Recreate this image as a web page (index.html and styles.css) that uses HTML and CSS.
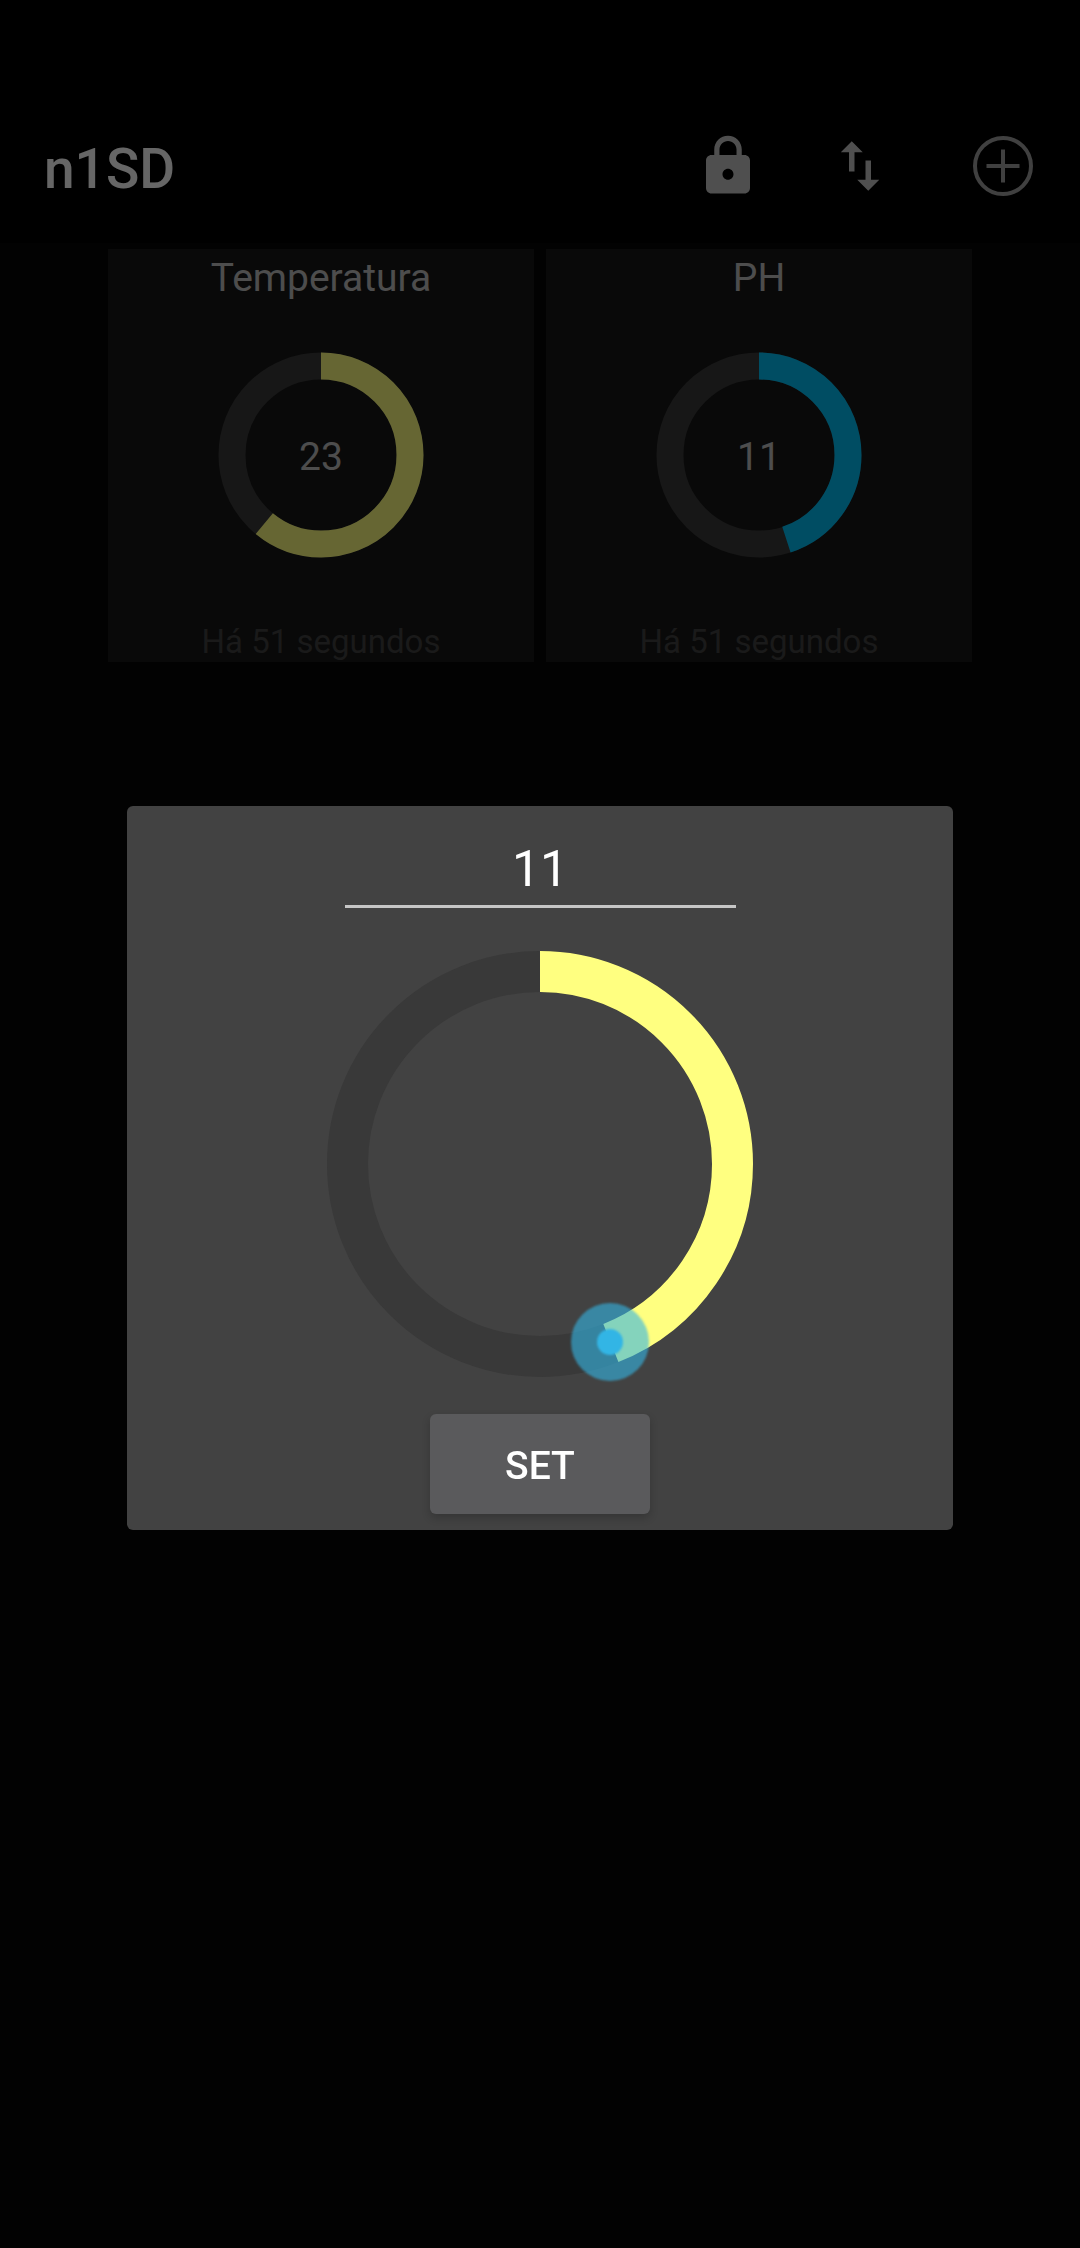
FILE: index.html
```html
<!DOCTYPE html>
<html lang="pt-BR">
<head>
<meta charset="utf-8">
<meta name="viewport" content="width=device-width, initial-scale=1">
<title>n1SD</title>
<link rel="stylesheet" href="styles.css">
</head>
<body>
<header class="app-bar">
  <h1 class="app-title">n1SD</h1>
  <div class="actions">
    <div class="action-group">
      <button class="icon-button" type="button" aria-label="Bloquear">
        <svg class="icon" viewBox="0 0 24 24"><path d="M18 8h-1V6c0-2.760-2.240-5-5-5S7 3.240 7 6v2H6c-1.100 0-2 .9-2 2v10c0 1.100.9 2 2 2h12c1.100 0 2-.9 2-2V10c0-1.100-.9-2-2-2zm-6 9c-1.100 0-2-.9-2-2s.9-2 2-2 2 .9 2 2-.9 2-2 2zm3.100-9H8.900V6c0-1.710 1.390-3.100 3.100-3.100s3.100 1.390 3.100 3.100v2z"/></svg>
      </button>
      <button class="icon-button" type="button" aria-label="Ordenar">
        <svg class="icon" viewBox="0 0 24 24"><path d="M16 17.010V10h-2v7.010h-3L15 21l4-3.990h-3zM9 3L5 6.990h3V14h2V6.990h3L9 3z"/></svg>
      </button>
    </div>
    <button class="icon-button" type="button" aria-label="Adicionar">
      <svg class="icon icon-outline" viewBox="0 0 66 66"><circle cx="33" cy="33" r="28"/><path d="M33 16.500v33M16.500 33h33"/></svg>
    </button>
  </div>
</header>

<main class="cards">
  <article class="card">
    <h2 class="card-title">Temperatura</h2>
    <div class="gauge">
      <svg class="gauge-ring" viewBox="0 0 206 206">
        <circle class="track" cx="103" cy="103" r="89"/>
        <circle class="arc arc-yellow" cx="103" cy="103" r="89" pathLength="100" stroke-dasharray="61 100" transform="rotate(-90 103 103)"/>
      </svg>
      <span class="gauge-value">23</span>
    </div>
    <p class="card-time">Há 51 segundos</p>
  </article>
  <article class="card">
    <h2 class="card-title">PH</h2>
    <div class="gauge">
      <svg class="gauge-ring" viewBox="0 0 206 206">
        <circle class="track" cx="103" cy="103" r="89"/>
        <circle class="arc arc-blue" cx="103" cy="103" r="89" pathLength="100" stroke-dasharray="45 100" transform="rotate(-90 103 103)"/>
      </svg>
      <span class="gauge-value">11</span>
    </div>
    <p class="card-time">Há 51 segundos</p>
  </article>
</main>

<div class="scrim">
  <form class="dialog" role="dialog" aria-label="Definir valor">
    <input class="value-input" type="text" inputmode="numeric" value="11" aria-label="Valor">
    <div class="dial">
      <svg class="dial-ring" viewBox="0 0 428 428">
        <defs>
          <filter id="soft" x="-20%" y="-20%" width="140%" height="140%"><feGaussianBlur stdDeviation="0.8"/></filter>
        </defs>
        <circle class="dial-track" cx="214" cy="214" r="192.500"/>
        <circle class="dial-arc" cx="214" cy="214" r="192.500" pathLength="100" stroke-dasharray="44 100" transform="rotate(-90 214 214)"/>
        <g class="knob" filter="url(#soft)">
          <circle cx="284" cy="392" r="39" fill-opacity="0.6"/>
          <circle cx="284" cy="392" r="13"/>
        </g>
      </svg>
      <input class="dial-input" type="range" min="0" max="25" value="11" aria-label="Ajustar valor">
    </div>
    <button class="set-button" type="button">SET</button>
  </form>
</div>
</body>
</html>
```
FILE: styles.css
```css
* {
  box-sizing: border-box;
}

body {
  margin: 0;
  min-height: 100vh;
  background: #050505;
  color: #c0c0c0;
  font-family: Roboto, "Liberation Sans", sans-serif;
}

.app-bar {
  display: flex;
  align-items: center;
  justify-content: space-between;
  min-height: 243px;
  padding: 94px 44px 0;
  background: #000;
}

.app-title {
  margin: 0;
  color: #fff;
  font-size: 55px;
  font-weight: 500;
  line-height: 64px;
}

.actions {
  display: flex;
  gap: 77px;
  padding-bottom: 5px;
}

.action-group {
  display: flex;
  gap: 66px;
}

.icon-button {
  padding: 0;
  border: 0;
  background: none;
  color: #c6c6c6;
}

.icon {
  display: block;
  width: 66px;
  height: 66px;
  fill: currentColor;
}

.icon-outline {
  fill: none;
  stroke: #a0a0a0;
  stroke-width: 4;
}

.cards {
  display: grid;
  grid-template-columns: 1fr 1fr;
  gap: 12px;
  padding: 6px 10% 0;
}

.card {
  display: flex;
  flex-direction: column;
  align-items: center;
  padding-top: 5px;
  background: #171717;
}

.card-title {
  margin: 0;
  font-size: 39px;
  font-weight: 400;
  line-height: 48px;
}

.gauge {
  display: grid;
  place-items: center;
  margin: 50px 0 64px;
}

.gauge-ring,
.gauge-value {
  grid-area: 1 / 1;
}

.gauge-ring {
  width: 206px;
  height: 206px;
  fill: none;
  stroke-width: 27;
}

.gauge-value {
  padding-top: 4px;
  font-size: 39px;
  line-height: 48px;
}

.track {
  stroke: #3a3a3a;
}

.arc-yellow {
  stroke: #ffff80;
}

.arc-blue {
  stroke: #00c0f8;
}

.card-time {
  margin: 0;
  color: #414141;
  font-size: 33px;
  line-height: 40px;
}

.scrim {
  position: fixed;
  inset: 0;
  display: grid;
  place-items: center;
  padding-top: 88px;
  background: rgba(0, 0, 0, 0.6);
}

.dialog {
  display: flex;
  flex-direction: column;
  align-items: center;
  width: 826px;
  max-width: 90%;
  padding: 26px 16px 16px;
  border-radius: 6px;
  background: #424242;
}

.value-input {
  width: 391px;
  max-width: 100%;
  height: 76px;
  padding: 0;
  border: 0;
  border-bottom: 3px solid #c6c6c6;
  outline: 0;
  background: none;
  color: #fff;
  font: 400 50px/72px Roboto, "Liberation Sans", sans-serif;
  text-align: center;
}

.dial {
  position: relative;
  margin: 42px 0 36px;
}

.dial-ring {
  display: block;
  width: 428px;
  height: 428px;
  overflow: visible;
  fill: none;
  stroke-width: 41;
}

.dial-track {
  stroke: #393939;
}

.dial-arc {
  stroke: #ffff80;
}

.knob {
  fill: #33b5e5;
  stroke: none;
}

.dial-input {
  position: absolute;
  inset: 0;
  width: 100%;
  height: 100%;
  margin: 0;
  opacity: 0;
}

.set-button {
  width: 220px;
  height: 100px;
  padding: 4px 0 0;
  border: 0;
  border-radius: 6px;
  background: #5a5a5c;
  box-shadow: 0 4px 8px rgba(0, 0, 0, 0.2);
  color: #fff;
  font: 500 39px/48px Roboto, "Liberation Sans", sans-serif;
}
```
